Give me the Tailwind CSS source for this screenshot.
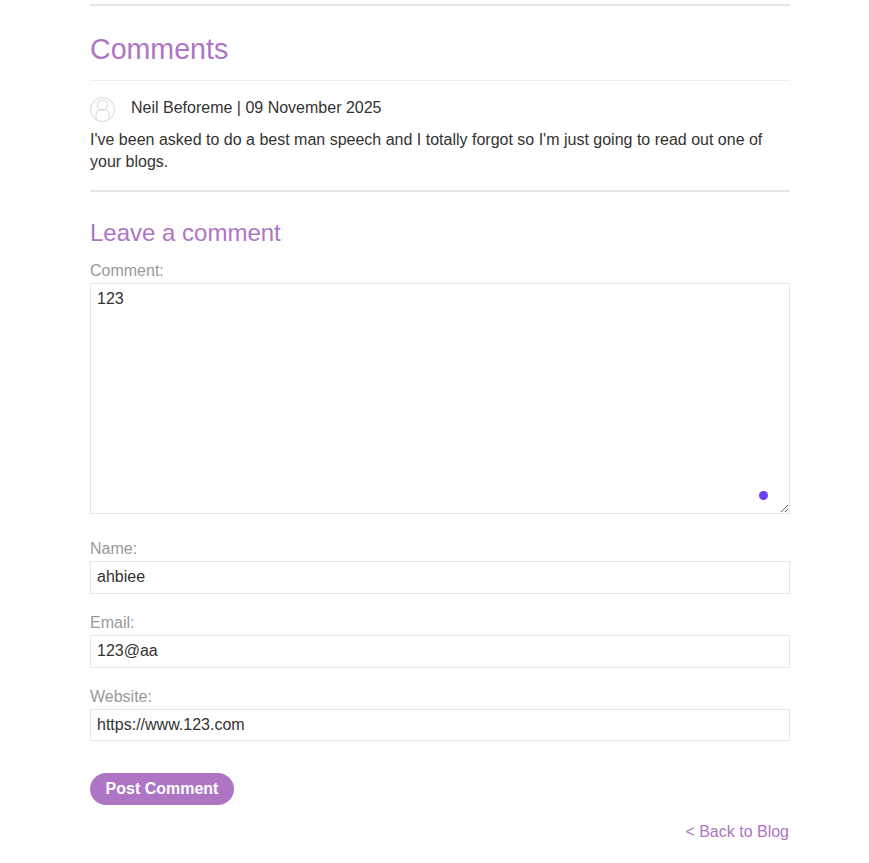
<!DOCTYPE html>
<html lang="en">
<head>
<meta charset="utf-8">
<title>Comments</title>
<script src="https://cdn.jsdelivr.net/npm/@tailwindcss/browser@4"></script>
</head>
<body class="bg-white font-['Liberation_Sans',Arial,sans-serif] text-[16px] text-[#333332] overflow-hidden">
<main class="relative w-[700px] ml-[90px] pt-[4px] h-[863px]">
  <hr class="border-0 border-t-2 border-[#e6e6e6]">
  <h2 class="text-[28.6px] leading-[32px] text-[#ae75c5] mt-[27px] mb-[15px]">Comments</h2>
  <section class="border-t border-[#e9eff3] pt-[16px]">
    <div class="flex items-start h-[25px]">
      <svg class="w-[25px] h-[25px] shrink-0" viewBox="0 0 25 25" fill="none" stroke="#d6d6d6" stroke-width="1">
        <circle cx="12.5" cy="12.5" r="12"/>
        <circle cx="12.500" cy="8" r="5"/>
        <path d="M6 23v-6a4 4 0 0 1 4-4h5a4 4 0 0 1 4 4v6"/>
      </svg>
      <p class="ml-[16px] leading-[22px]">Neil Beforeme | 09 November 2025</p>
    </div>
    <p class="leading-[22px] mt-[7px]">I've been asked to do a best man speech and I totally forgot so I'm just going to read out one of your blogs.</p>
  </section>
  <hr class="border-0 border-t-2 border-[#e6e6e6] mt-[17px]">
  <h3 class="text-[24px] leading-[28px] text-[#ae75c5] mt-[27px] mb-[15px]">Leave a comment</h3>
  <form class="flex flex-col">
    <label for="comment" class="leading-[18px] text-[#999999] h-[21px]">Comment:</label>
    <div class="relative h-[231px] mb-[26px]">
      <textarea id="comment" class="block w-full h-[231px] border border-[#e6e6e6] px-[6px] py-[5px] leading-[20px] outline-none">123</textarea>
      <span class="absolute right-[22px] bottom-[14px] w-[9px] h-[9px] rounded-full bg-[#6a3ff0]"></span>
    </div>
    <label for="name" class="leading-[18px] text-[#999999] h-[21px]">Name:</label>
    <input id="name" value="ahbiee" class="block w-full h-[33px] border border-[#e6e6e6] px-[6px] pb-[2px] mb-[20px] outline-none">
    <label for="email" class="leading-[18px] text-[#999999] h-[21px]">Email:</label>
    <input id="email" value="123@aa" class="block w-full h-[33px] border border-[#e6e6e6] px-[6px] pb-[2px] mb-[20px] outline-none">
    <label for="website" class="leading-[18px] text-[#999999] h-[21px]">Website:</label>
    <input id="website" value="https://www.123.com" class="block w-full h-[32px] border border-[#e6e6e6] px-[6px] mb-[32px] outline-none">
    <button type="button" class="w-[144px] h-[32px] rounded-full bg-[#ae75c5] text-white font-bold text-center">Post Comment</button>
  </form>
  <div class="text-right pr-[1px] mt-[18px] leading-[18px]"><a href="#" class="text-[#ae75c5]">&lt; Back to Blog</a></div>
</main>
</body>
</html>
